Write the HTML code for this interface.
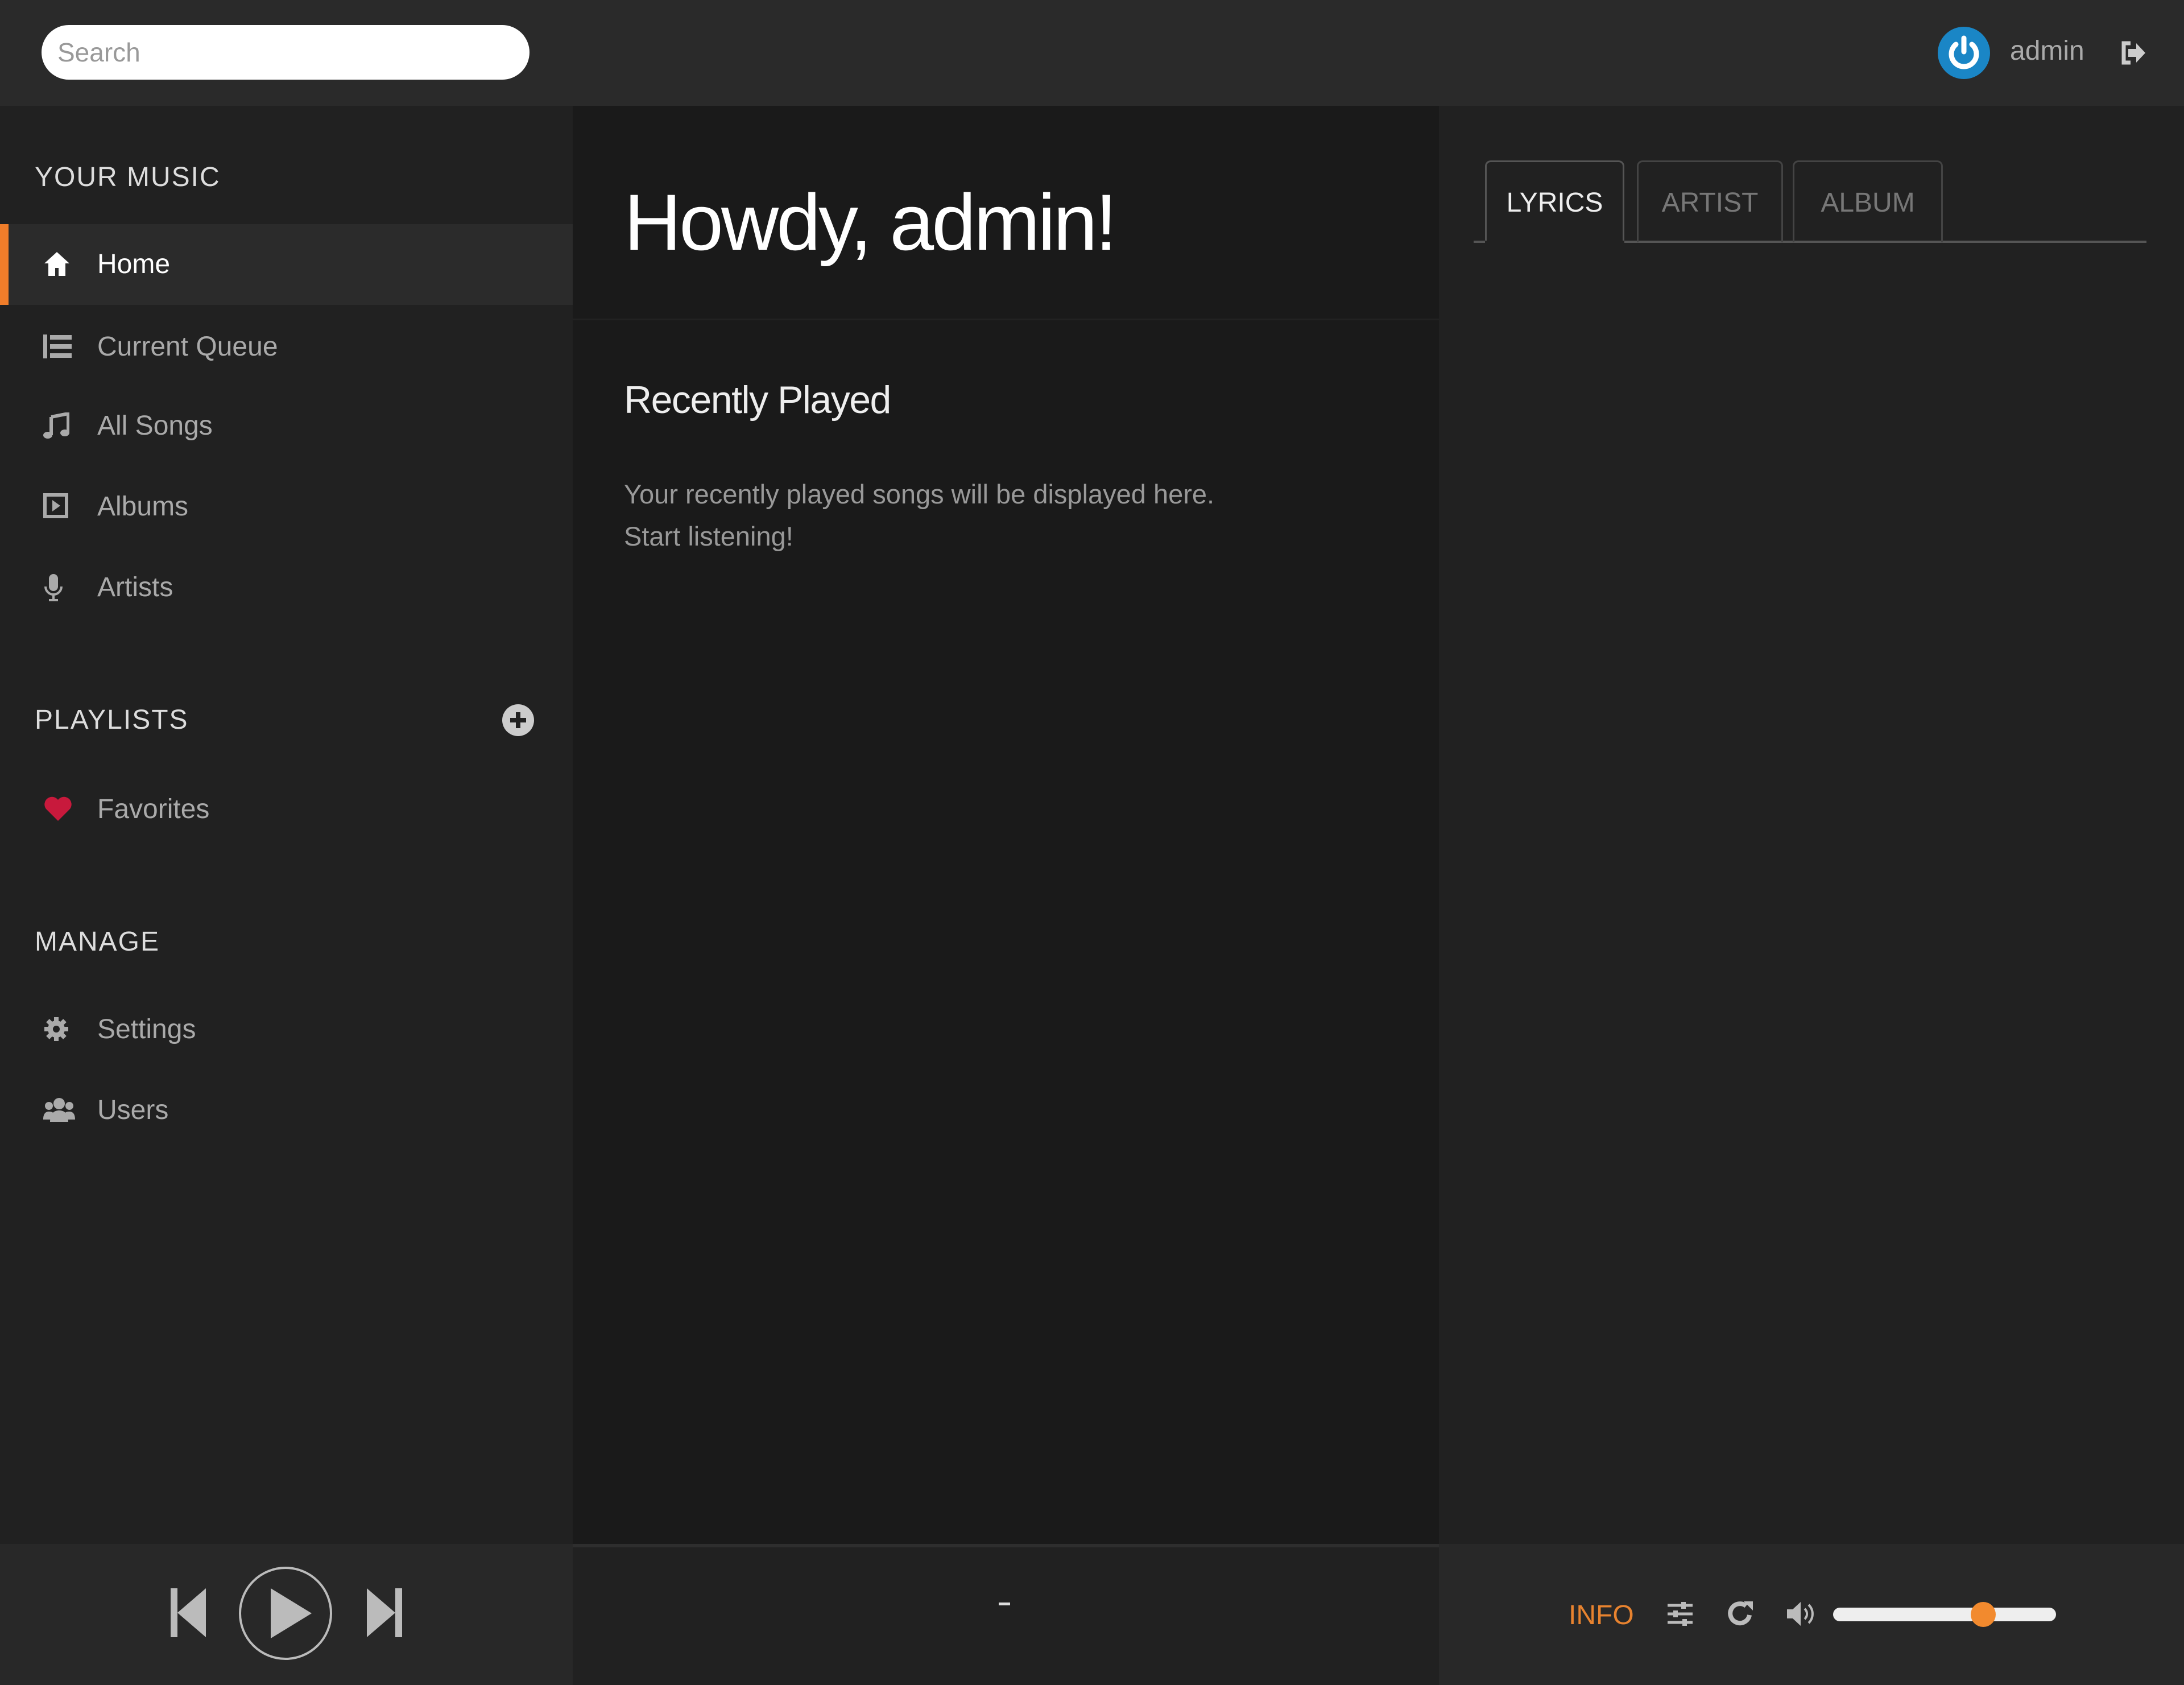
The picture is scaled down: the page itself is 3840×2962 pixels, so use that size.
<!DOCTYPE html>
<html><head><meta charset="utf-8"><style>
*{margin:0;padding:0;box-sizing:border-box}
body{width:3840px;height:2962px;background:#212121;font-family:"Liberation Sans",sans-serif;position:relative;overflow:hidden;color:#ccc}
.a{position:absolute}
.top{left:0;top:0;width:3840px;height:186px;background:#2a2a2a}
.search{left:73px;top:44px;width:858px;height:96px;border-radius:48px;background:#fff;color:#999;font-size:46px;line-height:96px;padding-left:28px}
.side{left:0;top:186px;width:1007px;height:2528px;background:#212121}
.main{left:1007px;top:186px;width:1523px;height:2528px;background:#1a1a1a}
.right{left:2530px;top:186px;width:1310px;height:2528px;background:#212121}
.hdr{font-size:48px;letter-spacing:2px;color:#ddd;left:61px}
.item{left:0;width:1007px;height:142px;font-size:48px;color:#aaa;line-height:142px;padding-left:171px}
.item svg{position:absolute;left:76px;top:47px}
.tab{top:282px;height:144px;border:3px solid #444;border-bottom:none;border-radius:10px 10px 0 0;font-size:48px;color:#777;text-align:center;line-height:144px}
.foot{top:2714px;height:248px}
</style></head><body>
<div class="a top"></div>
<div class="a search">Search</div>
<svg class="a" style="left:3405px;top:45px" width="96" height="96" viewBox="0 0 96 96"><circle cx="48" cy="48" r="46" fill="#1a86c6"/><path d="M34 33a22 22 0 1 0 28 0" stroke="#fff" stroke-width="9" fill="none" stroke-linecap="round"/><path d="M48 22v24" stroke="#fff" stroke-width="9" stroke-linecap="round"/></svg>
<div class="a" style="left:3534px;top:62px;font-size:48px;color:#aaa">admin</div>
<svg class="a" style="left:3728px;top:72px" width="46" height="42" viewBox="0 0 46 42"><path d="M18 4H6v34h12" stroke="#ccc" stroke-width="7" fill="none"/><path d="M14 14h14V4l16 17-16 17V28H14z" fill="#ccc"/></svg>

<div class="a side"></div>
<div class="a main"></div>
<div class="a right"></div>

<div class="a hdr" style="top:284px">YOUR MUSIC</div>
<div class="a item" style="top:394px;background:#2b2b2b;color:#fff"><div class="a" style="left:0;top:0;width:15px;height:142px;background:#f07d2a"></div>
<svg width="48" height="46" viewBox="0 0 48 46"><path d="M24 2L2 22h7v22h12V30h6v14h12V22h7z" fill="#fff"/></svg>Home</div>
<div class="a item" style="top:539px"><svg width="50" height="46" viewBox="0 0 50 46"><rect x="0" y="2" width="7" height="42" fill="#aaa"/><rect x="12" y="3" width="38" height="8" fill="#aaa"/><rect x="12" y="19" width="38" height="8" fill="#aaa"/><rect x="12" y="35" width="38" height="8" fill="#aaa"/></svg>Current Queue</div>
<div class="a item" style="top:678px"><svg width="46" height="48" viewBox="0 0 46 48"><path d="M14 8L44 2v34" stroke="#aaa" stroke-width="6" fill="none"/><path d="M14 8v32" stroke="#aaa" stroke-width="6"/><ellipse cx="8" cy="40" rx="8" ry="6" fill="#aaa"/><ellipse cx="38" cy="36" rx="8" ry="6" fill="#aaa"/></svg>All Songs</div>
<div class="a item" style="top:820px"><svg width="44" height="44" viewBox="0 0 44 44"><rect x="3" y="3" width="38" height="38" stroke="#aaa" stroke-width="6" fill="none"/><path d="M16 12l14 10-14 10z" fill="#aaa"/></svg>Albums</div>
<div class="a item" style="top:962px"><svg width="36" height="48" viewBox="0 0 36 48"><rect x="10" y="0" width="16" height="30" rx="8" fill="#aaa"/><path d="M4 22a14 14 0 0 0 28 0" stroke="#aaa" stroke-width="4" fill="none"/><path d="M18 36v8M10 46h16" stroke="#aaa" stroke-width="4"/></svg>Artists</div>

<div class="a hdr" style="top:1238px">PLAYLISTS</div>
<svg class="a" style="left:883px;top:1238px" width="56" height="56" viewBox="0 0 56 56"><circle cx="28" cy="28" r="28" fill="#ccc"/><path d="M28 14v28M14 28h28" stroke="#212121" stroke-width="8"/></svg>
<div class="a item" style="top:1352px"><svg width="52" height="46" viewBox="0 0 52 46"><path d="M26 44L5 23A13 13 0 0 1 26 7A13 13 0 0 1 47 23z" fill="#c8193c"/></svg>Favorites</div>

<div class="a hdr" style="top:1628px">MANAGE</div>
<div class="a item" style="top:1739px"><svg width="46" height="46" viewBox="0 0 46 46"><circle cx="23" cy="23" r="15" fill="#aaa"/><path d="M23 2v42M2 23h42M8 8l30 30M38 8L8 38" stroke="#aaa" stroke-width="8"/><circle cx="23" cy="23" r="6" fill="#212121"/></svg>Settings</div>
<div class="a item" style="top:1881px"><svg width="56" height="46" viewBox="0 0 56 46"><circle cx="28" cy="12" r="10" fill="#aaa"/><circle cx="10" cy="16" r="7" fill="#aaa"/><circle cx="46" cy="16" r="7" fill="#aaa"/><path d="M12 44c0-16 8-20 16-20s16 4 16 20z" fill="#aaa"/><path d="M0 40c0-10 4-14 10-14s8 2 8 4l-4 10z M56 40c0-10-4-14-10-14s-8 2-8 4l4 10z" fill="#aaa"/></svg>Users</div>

<div class="a" style="left:1097px;top:310px;font-size:140px;color:#fff;letter-spacing:-4px">Howdy, admin!</div>
<div class="a" style="left:1007px;top:560px;width:1523px;height:3px;background:#222"></div>
<div class="a" style="left:1097px;top:664px;font-size:68px;color:#eee;letter-spacing:-1.5px">Recently Played</div>
<div class="a" style="left:1097px;top:832px;font-size:47px;color:#999;line-height:74px">Your recently played songs will be displayed here.<br>Start listening!</div>

<div class="a" style="left:2591px;top:423px;width:1183px;height:4px;background:#555"></div>
<div class="a tab" style="left:2611px;width:245px;color:#eee;background:#212121;border-color:#555">LYRICS</div>
<div class="a tab" style="left:2878px;width:257px">ARTIST</div>
<div class="a tab" style="left:3152px;width:264px">ALBUM</div>
<div class="a" style="left:2611px;top:423px;width:245px;height:4px;background:#212121"></div>

<div class="a foot" style="left:0;width:1007px;background:#282828"></div>
<div class="a foot" style="left:1007px;width:1523px;background:#212121;border-top:6px solid #2e2e2e"></div>
<div class="a foot" style="left:2530px;width:1310px;background:#282828"></div>
<svg class="a" style="left:300px;top:2790px" width="64" height="90" viewBox="0 0 64 90"><rect x="0" y="2" width="12" height="86" fill="#bbb"/><path d="M62 2v86L12 45z" fill="#bbb"/></svg>
<svg class="a" style="left:418px;top:2752px" width="168" height="168" viewBox="0 0 168 168"><circle cx="84" cy="84" r="80" stroke="#bbb" stroke-width="4" fill="none"/><path d="M58 40v88l72-44z" fill="#bbb"/></svg>
<svg class="a" style="left:643px;top:2790px" width="64" height="90" viewBox="0 0 64 90"><rect x="52" y="2" width="12" height="86" fill="#bbb"/><path d="M2 2v86L52 45z" fill="#bbb"/></svg>
<div class="a" style="left:1756px;top:2817px;width:20px;height:5px;background:#ddd"></div>

<div class="a" style="left:2758px;top:2812px;font-size:48px;color:#e8832f">INFO</div>
<svg class="a" style="left:2930px;top:2814px" width="48" height="46" viewBox="0 0 48 46"><path d="M2 8h44M2 23h44M2 38h44" stroke="#bbb" stroke-width="5"/><rect x="26" y="2" width="8" height="12" fill="#bbb"/><rect x="12" y="17" width="8" height="12" fill="#bbb"/><rect x="28" y="32" width="8" height="12" fill="#bbb"/></svg>
<svg class="a" style="left:3036px;top:2813px" width="48" height="48" viewBox="0 0 48 48"><path d="M40 26A17 17 0 1 1 34 10" stroke="#bbb" stroke-width="8" fill="none"/><path d="M30 2h16v16z" fill="#bbb"/></svg>
<svg class="a" style="left:3140px;top:2814px" width="54" height="46" viewBox="0 0 54 46"><path d="M2 15h10L26 2v42L12 31H2z" fill="#bbb"/><path d="M33 14a12 12 0 0 1 0 18M40 7a22 22 0 0 1 0 32" stroke="#bbb" stroke-width="4" fill="none"/></svg>
<div class="a" style="left:3223px;top:2826px;width:392px;height:24px;border-radius:12px;background:#eee"></div>
<div class="a" style="left:3465px;top:2816px;width:44px;height:44px;border-radius:50%;background:#f28a2e"></div>
</body></html>
